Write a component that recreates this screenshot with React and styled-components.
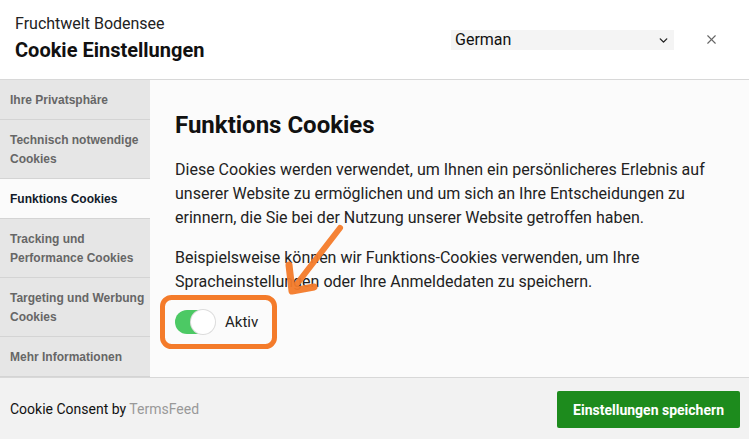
import React from 'react'
import styled, { createGlobalStyle } from 'styled-components'
import { ChevronDown, X } from 'lucide-react'

const GlobalStyle = createGlobalStyle`
    html, body {
        margin: 0;
        padding: 0;
        background: #fff;
    }
    body {
        font-family: Roboto, "Liberation Sans", sans-serif;
        color: #222;
    }
`

const Modal = styled.div`
    width: 749px;
    height: 439px;
    display: flex;
    flex-direction: column;
    background: #fff;
    overflow: hidden;
    position: relative;
`

const Header = styled.div`
    height: 79px;
    border-bottom: 1px solid #d8d8d8;
    display: flex;
    align-items: center;
    padding: 0 15px;
    box-sizing: content-box;
`

const Brand = styled.div`
    flex: 1;
    display: flex;
    flex-direction: column;

    & span.site {
        font-size: 16px;
        line-height: 20px;
        color: #222;
        margin-top: -2px;
    }
    & h1 {
        margin: 3px 0 0 0;
        font-size: 20px;
        line-height: 26px;
        font-weight: 700;
        color: #111;
    }
`

const LangSelect = styled.div`
    position: relative;
    width: 223px;
    height: 20px;
    background: #f4f4f4;

    & select {
        appearance: none;
        width: 100%;
        height: 100%;
        border: none;
        background: transparent;
        font-family: Roboto, sans-serif;
        font-size: 16px;
        color: #111;
        padding: 0 0 0 4px;
        outline: none;
    }
    & svg {
        position: absolute;
        right: 4px;
        top: 4px;
        pointer-events: none;
    }
`

const CloseBtn = styled.button`
    border: none;
    background: none;
    padding: 0;
    margin: 0 15px 0 30px;
    color: #666;
    display: flex;
    cursor: pointer;
`

const Body = styled.div`
    flex: 1;
    display: flex;
    min-height: 0;
`

const Sidebar = styled.ul`
    width: 150px;
    margin: 0;
    padding: 0;
    list-style: none;
    background: #e6e6e6;
    display: flex;
    flex-direction: column;
`

const NavItem = styled.li`
    padding: 11px 4px 9px 10px;
    font-family: "Liberation Sans", Arial, sans-serif;
    font-size: 12px;
    line-height: 19px;
    font-weight: 700;
    color: ${p => (p.$active ? '#111a2a' : '#666')};
    background: ${p => (p.$active ? '#fbfbfb' : 'transparent')};
    border-bottom: 1px solid #d4d4d4;
`

const Content = styled.div`
    flex: 1;
    background: #fbfbfb;
    padding: 29px 25px 0 25px;

    & h2 {
        margin: 0 0 17px 0;
        font-size: 24px;
        line-height: 32px;
        font-weight: 700;
        color: #111;
    }
    & p {
        margin: 0 0 16px 0;
        font-size: 16px;
        line-height: 24px;
        color: #222;
    }
`

const ToggleRow = styled.div`
    display: flex;
    align-items: center;
    gap: 10px;
    margin-top: 16px;
    font-size: 15px;
    color: #222;
`

const Track = styled.span`
    width: 40px;
    height: 24px;
    border-radius: 12px;
    background: #4cc964;
    display: flex;
    align-items: center;
    justify-content: flex-end;
`

const Knob = styled.span`
    width: 24px;
    height: 24px;
    border-radius: 50%;
    background: #fff;
    box-shadow: 0 0 0 1px #dcdcdc;
`

const Footer = styled.div`
    height: 61px;
    border-top: 1px solid #d8d8d8;
    background: #f2f2f2;
    display: flex;
    align-items: center;
    justify-content: space-between;
    padding: 0 9px 0 10px;
    font-size: 14px;
    color: #111;

    & span.by {
        color: #999;
    }
`

const SaveButton = styled.button`
    background: #1d8b1d;
    color: #fff;
    border: none;
    border-radius: 2px;
    height: 37px;
    padding: 0 16px;
    font-family: Roboto, sans-serif;
    font-size: 14px;
    font-weight: 700;
    margin-top: 2px;
`

const Annotation = styled.svg`
    position: absolute;
    left: 0;
    top: 0;
    pointer-events: none;
`

const navItems = [
    'Ihre Privatsphäre',
    'Technisch notwendige Cookies',
    'Funktions Cookies',
    'Tracking und Performance Cookies',
    'Targeting und Werbung Cookies',
    'Mehr Informationen',
]

const App = () => {
    return (
        <>
            <GlobalStyle />
            <Modal>
                <Header>
                    <Brand>
                        <span className="site">Fruchtwelt Bodensee</span>
                        <h1>Cookie Einstellungen</h1>
                    </Brand>
                    <LangSelect>
                        <select defaultValue="de">
                            <option value="de">German</option>
                        </select>
                        <ChevronDown size={13} strokeWidth={2.5} color="#222" />
                    </LangSelect>
                    <CloseBtn aria-label="close">
                        <X size={15} strokeWidth={1.8} />
                    </CloseBtn>
                </Header>
                <Body>
                    <Sidebar>
                        {navItems.map(item => (
                            <NavItem key={item} $active={item === 'Funktions Cookies'}>{item}</NavItem>
                        ))}
                    </Sidebar>
                    <Content>
                        <h2>Funktions Cookies</h2>
                        <p>Diese Cookies werden verwendet, um Ihnen ein persönlicheres Erlebnis auf unserer Website zu ermöglichen und um sich an Ihre Entscheidungen zu erinnern, die Sie bei der Nutzung unserer Website getroffen haben.</p>
                        <p>Beispielsweise können wir Funktions-Cookies verwenden, um Ihre Spracheinstellungen oder Ihre Anmeldedaten zu speichern.</p>
                        <ToggleRow>
                            <Track><Knob /></Track>
                            Aktiv
                        </ToggleRow>
                    </Content>
                </Body>
                <Footer>
                    <span>Cookie Consent by <span className="by">TermsFeed</span></span>
                    <SaveButton>Einstellungen speichern</SaveButton>
                </Footer>
                {/* orange highlight drawn over the screenshot */}
                <Annotation width="749" height="439">
                    <rect x="162.5" y="297.5" width="112" height="49" rx="9" fill="none" stroke="#f47b2a" strokeWidth="5" />
                    <g stroke="#f47b2a" strokeLinecap="round" strokeLinejoin="round" fill="none" opacity="0.95">
                        <path d="M340 228 L293 289" strokeWidth="6" />
                        <path d="M289 265 L292 291 L314 287" strokeWidth="7" />
                    </g>
                </Annotation>
            </Modal>
        </>
    )
}

export default App
